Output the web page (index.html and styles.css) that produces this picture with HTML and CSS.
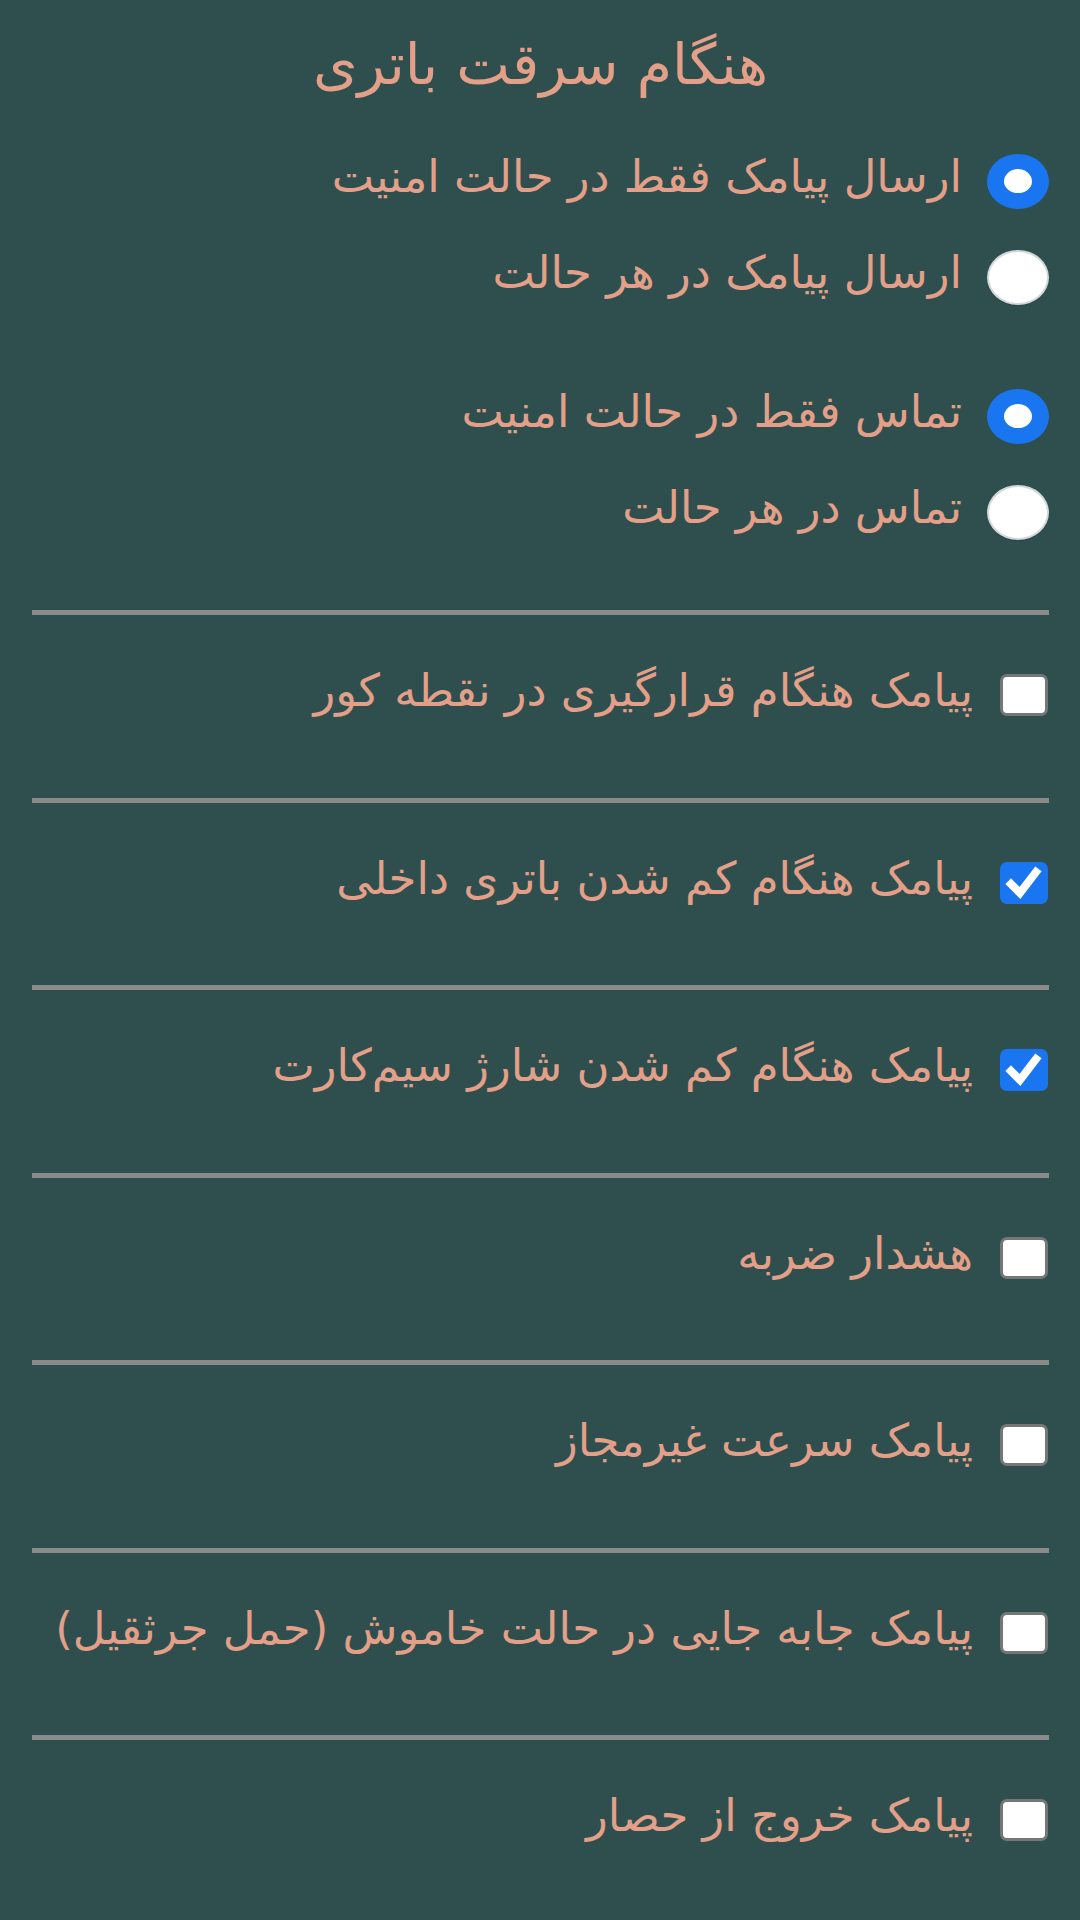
FILE: index.html
```html
<!DOCTYPE html>
<html lang="fa" dir="rtl">
<head>
<meta charset="utf-8">
<title>هنگام سرقت باتری</title>
<link rel="stylesheet" href="styles.css">
</head>
<body>
<main class="page">
  <h1 class="title">هنگام سرقت باتری</h1>

  <div class="group">
    <div class="row radio-row"><span class="radio on"></span><span class="label">ارسال پیامک فقط در حالت امنیت</span></div>
    <div class="row radio-row"><span class="radio"></span><span class="label">ارسال پیامک در هر حالت</span></div>
  </div>
  <div class="group second">
    <div class="row radio-row"><span class="radio on"></span><span class="label">تماس فقط در حالت امنیت</span></div>
    <div class="row radio-row"><span class="radio"></span><span class="label">تماس در هر حالت</span></div>
  </div>

  <div class="list">
    <section class="item">
      <hr class="divider">
      <div class="row check-row"><span class="check"></span><span class="label">پیامک هنگام قرارگیری در نقطه کور</span></div>
    </section>
    <section class="item">
      <hr class="divider">
      <div class="row check-row"><span class="check on"><svg viewBox="0 0 48 42"><path d="M11 22 L20 31 L36 10" /></svg></span><span class="label">پیامک هنگام کم شدن باتری داخلی</span></div>
    </section>
    <section class="item">
      <hr class="divider">
      <div class="row check-row"><span class="check on"><svg viewBox="0 0 48 42"><path d="M11 22 L20 31 L36 10" /></svg></span><span class="label">پیامک هنگام کم شدن شارژ سیم‌کارت</span></div>
    </section>
    <section class="item">
      <hr class="divider">
      <div class="row check-row"><span class="check"></span><span class="label">هشدار ضربه</span></div>
    </section>
    <section class="item">
      <hr class="divider">
      <div class="row check-row"><span class="check"></span><span class="label">پیامک سرعت غیرمجاز</span></div>
    </section>
    <section class="item">
      <hr class="divider">
      <div class="row check-row"><span class="check"></span><span class="label">پیامک جابه جایی در حالت خاموش (حمل جرثقیل)</span></div>
    </section>
    <section class="item">
      <hr class="divider">
      <div class="row check-row"><span class="check"></span><span class="label">پیامک خروج از حصار</span></div>
    </section>
  </div>
</main>
</body>
</html>
```

FILE: styles.css
```css
html, body {
  margin: 0;
  padding: 0;
  background: #2f4f4f;
}

body {
  font-family: "DejaVu Sans", "Noto Sans", sans-serif;
  color: #e39f88;
}

.page {
  padding: 0 31px 0 32px;
  height: 1920px;
  box-sizing: border-box;
}

.title {
  margin: 0;
  height: 133px;
  line-height: 128px;
  font-size: 57px;
  font-weight: normal;
  text-align: center;
}

.group {
  display: flex;
  flex-direction: column;
}

.group.second {
  margin-top: 43px;
}

.row {
  display: flex;
  align-items: center;
}

.radio-row {
  height: 96px;
  gap: 25px;
}

.label {
  font-size: 45px;
  line-height: 56px;
  white-space: nowrap;
  position: relative;
  top: -4px;
}

.radio {
  flex: none;
  width: 62px;
  height: 55px;
  border-radius: 50%;
  box-sizing: border-box;
  background: #ffffff;
  border: 2px solid #d3d6da;
  box-shadow: 0 1px 1px rgba(0, 0, 0, 0.15);
}

.radio.on {
  border: 17px solid #1a76f0;
  border-top-width: 15px;
  border-bottom-width: 16px;
  box-shadow: none;
}

.list {
  margin-top: 50px;
}

.item {
  display: flex;
  flex-direction: column;
}

.divider {
  margin: 0;
  height: 5px;
  border: 0;
  background: #8a8a8a;
}

.check-row {
  height: 56px;
  margin-top: 52px;
  margin-bottom: 74.5px;
  gap: 27px;
  padding-right: 1px;
}

.check {
  flex: none;
  width: 48px;
  height: 42px;
  box-sizing: border-box;
  border-radius: 7px;
  background: #ffffff;
  border: 3px solid #767676;
  display: flex;
}

.check.on {
  background: #1a76f0;
  border: 0;
}

.check svg {
  width: 100%;
  height: 100%;
}

.check path {
  fill: none;
  stroke: #ffffff;
  stroke-width: 8;
  stroke-linecap: square;
  stroke-linejoin: miter;
}
```
